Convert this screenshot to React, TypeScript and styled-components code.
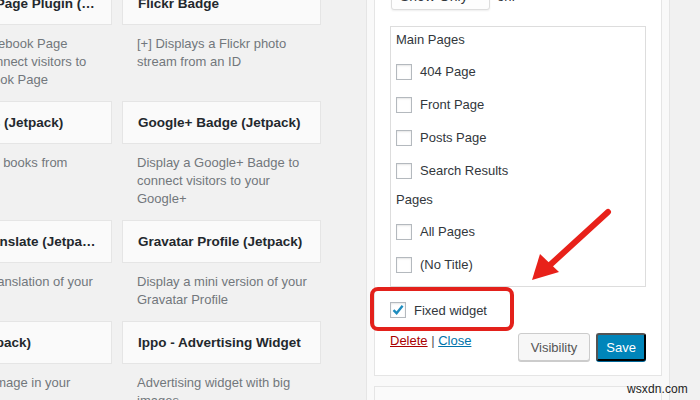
import * as React from 'react';
import styled, { createGlobalStyle } from 'styled-components';

const GlobalStyle = createGlobalStyle`
  html, body {
    margin: 0;
    padding: 0;
    background: #f1f1f1;
  }
  body {
    font-family: 'Liberation Sans', Arial, sans-serif;
    color: #32373c;
  }
`;

const Root = styled.div`
  position: relative;
  width: 700px;
  height: 400px;
  overflow: hidden;
  background: #f1f1f1;
`;

// the page is scrolled a little: the top rows are cut off
const Page = styled.div`
  display: flex;
  align-items: flex-start;
  gap: 45px;
  margin-top: -18px;
  margin-left: -87px;
`;

const WidgetGrid = styled.div`
  display: grid;
  grid-template-columns: 199px 199px;
  column-gap: 10px;
  row-gap: 12px;
  align-items: start;
`;

const Card = styled.div``;

const CardTitle = styled.div`
  box-sizing: border-box;
  height: 43px;
  line-height: 41px;
  padding: 0 15px;
  border: 1px solid #e5e5e5;
  background: #fafafa;
  font-size: 13.5px;
  font-weight: 700;
  color: #23282d;
  white-space: nowrap;
  overflow: hidden;
  text-overflow: ellipsis;
`;

const CardDesc = styled.div`
  margin-top: 10px;
  padding: 0 10px 0 15px;
  font-size: 13px;
  line-height: 18px;
  color: #72777c;
`;

const Sidebar = styled.div`
  box-sizing: border-box;
  width: 304px;
  margin-top: -24px;
  padding: 7px;
  border: 1px solid #e5e5e5;
  background: #f9f9f9;
`;

const OpenWidget = styled.div`
  border: 1px solid #e5e5e5;
  background: #fff;
  padding: 15px 15px 14px;
`;

const ClosedWidget = styled.div`
  height: 48px;
  margin-top: 10px;
  border: 1px solid #e5e5e5;
  background: #fafafa;
`;

const SelectRow = styled.div`
  display: flex;
  align-items: center;
  gap: 7px;
  font-size: 13px;
  color: #32373c;
`;

const Select = styled.div`
  box-sizing: border-box;
  display: flex;
  align-items: center;
  justify-content: space-between;
  width: 99px;
  height: 28px;
  margin-left: 1px;
  padding: 0 8px;
  border: 1px solid #ddd;
  border-radius: 3px;
  background: #fdfdfd;
  box-shadow: 0 1px 2px rgba(0, 0, 0, 0.07);
  font-size: 14px;
  color: #32373c;
`;

const PageList = styled.div`
  margin-top: 16px;
  padding: 4px 5px 5px;
  border: 1px solid #ddd;
`;

const GroupLabel = styled.div<{ $spaced?: boolean }>`
  margin-top: ${(p) => (p.$spaced ? '4px' : '0')};
  margin-bottom: 6px;
  font-size: 13px;
  line-height: 18px;
  color: #32373c;
`;

const CheckRow = styled.label`
  display: flex;
  align-items: center;
  gap: 8px;
  height: 33px;
  font-size: 13px;
  color: #32373c;
`;

const Box = styled.span`
  box-sizing: border-box;
  display: inline-flex;
  align-items: center;
  justify-content: center;
  width: 16px;
  height: 16px;
  border: 1px solid #b4b9be;
  background: #fff;
  box-shadow: inset 0 1px 2px rgba(0, 0, 0, 0.1);
`;

const FixedRow = styled(CheckRow)`
  position: relative;
  height: 28px;
  margin-top: 9px;
`;

const Highlight = styled.span`
  position: absolute;
  left: -20px;
  top: -9px;
  width: 144px;
  height: 44px;
  box-sizing: border-box;
  border: 4px solid #e3211b;
  border-radius: 8px;
`;

const Actions = styled.div`
  display: flex;
  justify-content: space-between;
  align-items: flex-start;
  margin-top: 8px;
`;

const Links = styled.div`
  font-size: 13px;
  line-height: 18px;
  color: #555;
`;

const Link = styled.a<{ $danger?: boolean }>`
  color: ${(p) => (p.$danger ? '#a00' : '#0073aa')};
  text-decoration: underline;
`;

const Buttons = styled.div`
  display: flex;
  gap: 6px;
  margin-top: 1px;
`;

const Button = styled.button<{ $primary?: boolean }>`
  box-sizing: border-box;
  height: 28px;
  padding: 0 ${(p) => (p.$primary ? '8px' : '12px')};
  border: 1px solid ${(p) => (p.$primary ? '#0073aa #006799 #006799' : '#ccc')};
  border-radius: 3px;
  background: ${(p) => (p.$primary ? '#0085ba' : '#f7f7f7')};
  box-shadow: 0 1px 0 ${(p) => (p.$primary ? '#006799' : '#ccc')};
  color: ${(p) => (p.$primary ? '#fff' : '#555')};
  font-family: 'Liberation Sans', Arial, sans-serif;
  font-size: 13px;
`;

const Arrow = styled.svg`
  position: absolute;
  left: 520px;
  top: 200px;
`;

const Watermark = styled.div`
  position: absolute;
  left: 627px;
  top: 382px;
  font-size: 12px;
  color: #222;
  letter-spacing: 0.1px;
`;

const Check = ({ checked }: { checked?: boolean }) => (
  <Box>
    {checked && (
      <svg width="14" height="14" viewBox="0 0 14 14">
        <path d="M2.5 7.2 L5.6 10.2 L11.6 2.8" fill="none" stroke="#1e8cbe" strokeWidth="2.4" />
      </svg>
    )}
  </Box>
);

const widgets = [
  ['Facebook Page Plugin (Jetpack)', 'Use the Facebook Page Plugin to connect visitors to your Facebook Page'],
  ['Flickr Badge', '[+] Displays a Flickr photo stream from an ID'],
  ['Goodreads (Jetpack)', 'Display your books from Goodreads'],
  ['Google+ Badge (Jetpack)', 'Display a Google+ Badge to connect visitors to your Google+'],
  ['Google Translate (Jetpack)', 'Automatic translation of your site content'],
  ['Gravatar Profile (Jetpack)', 'Display a mini version of your Gravatar Profile'],
  ['Image (Jetpack)', 'Display an image in your sidebar'],
  ['Ippo - Advertising Widget', 'Advertising widget with big images'],
];

const mainPages = ['404 Page', 'Front Page', 'Posts Page', 'Search Results'];
const pages = ['All Pages', '(No Title)'];

const App = (): JSX.Element => {
  return (
    <Root>
      <GlobalStyle />
      <Page>
        <WidgetGrid>
          {widgets.map(([title, desc]) => (
            <Card key={title}>
              <CardTitle>{title}</CardTitle>
              <CardDesc>{desc}</CardDesc>
            </Card>
          ))}
        </WidgetGrid>
        <Sidebar>
          <OpenWidget>
            <SelectRow>
              <Select>
                Show Only
                <svg width="10" height="10" viewBox="0 0 10 10">
                  <path d="M2 3.5 L5 6.5 L8 3.5" fill="none" stroke="#555" strokeWidth="1.6" />
                </svg>
              </Select>
              on:
            </SelectRow>
            <PageList>
              <GroupLabel>Main Pages</GroupLabel>
              {mainPages.map((p) => (
                <CheckRow key={p}>
                  <Check />
                  {p}
                </CheckRow>
              ))}
              <GroupLabel $spaced>Pages</GroupLabel>
              {pages.map((p) => (
                <CheckRow key={p}>
                  <Check />
                  {p}
                </CheckRow>
              ))}
            </PageList>
            <FixedRow>
              <Highlight />
              <Check checked />
              Fixed widget
            </FixedRow>
            <Actions>
              <Links>
                <Link $danger>Delete</Link> | <Link>Close</Link>
              </Links>
              <Buttons>
                <Button>Visibility</Button>
                <Button $primary>Save</Button>
              </Buttons>
            </Actions>
          </OpenWidget>
          <ClosedWidget />
        </Sidebar>
      </Page>
      <Arrow width="100" height="90" viewBox="0 0 100 90">
        <line x1="88" y1="12" x2="30" y2="65" stroke="#e8211a" strokeWidth="6" strokeLinecap="round" />
        <polygon points="12,80 20,54 39,72" fill="#e8211a" />
      </Arrow>
      <Watermark>wsxdn.com</Watermark>
    </Root>
  );
};

export default App;
